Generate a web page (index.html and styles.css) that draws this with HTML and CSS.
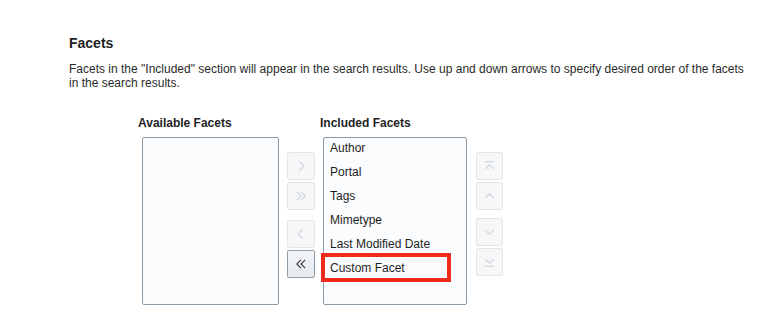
FILE: index.html
```html
<!DOCTYPE html>
<html>
<head>
<meta charset="utf-8">
<link rel="stylesheet" href="styles.css">
</head>
<body>
<div class="page">
  <h2 class="title">Facets</h2>
  <p class="desc">Facets in the "Included" section will appear in the search results. Use up and down arrows to specify desired order of the facets in the search results.</p>
  <div class="shuttle">
    <div class="col col-avail">
      <div class="label">Available Facets</div>
      <div class="listbox listbox-avail"></div>
    </div>
    <div class="btns btns-move">
      <div class="group">
        <button class="btn" disabled><svg viewBox="0 0 28 28"><path d="M12 9 17 14 12 19"/></svg></button>
        <button class="btn" disabled><svg viewBox="0 0 28 28"><path d="M9.5 9.5 14 14 9.5 18.5M14 9.5 18.5 14 14 18.5"/></svg></button>
      </div>
      <div class="group">
        <button class="btn" disabled><svg viewBox="0 0 28 28"><path d="M16 9 11 14 16 19"/></svg></button>
        <button class="btn btn-active"><svg viewBox="0 0 28 28"><path d="M14 9.5 9.5 14 14 18.5M18.5 9.5 14 14 18.5 18.5"/></svg></button>
      </div>
    </div>
    <div class="col col-incl">
      <div class="label">Included Facets</div>
      <div class="listbox listbox-incl">
        <div class="item">Author</div>
        <div class="item">Portal</div>
        <div class="item">Tags</div>
        <div class="item">Mimetype</div>
        <div class="item">Last Modified Date</div>
        <div class="item item-marked">Custom Facet</div>
      </div>
    </div>
    <div class="btns btns-order">
      <div class="group">
        <button class="btn sm" disabled><svg viewBox="0 0 27 27"><path d="M8.5 9h10M9 16.5 13.5 12 18 16.5"/></svg></button>
        <button class="btn sm" disabled><svg viewBox="0 0 27 27"><path d="M9 15.5 13.5 11 18 15.5"/></svg></button>
      </div>
      <div class="group">
        <button class="btn sm" disabled><svg viewBox="0 0 27 27"><path d="M9 11.5 13.5 16 18 11.5"/></svg></button>
        <button class="btn sm" disabled><svg viewBox="0 0 27 27"><path d="M9 10.5 13.5 15 18 10.5M8.5 18h10"/></svg></button>
      </div>
    </div>
  </div>
</div>
</body>
</html>
```
FILE: styles.css
```css
html, body {
  margin: 0;
  padding: 0;
  background: #ffffff;
}
body {
  font-family: "Liberation Sans", Arial, Helvetica, sans-serif;
  color: #2a2a2a;
  width: 758px;
  height: 310px;
  overflow: hidden;
}
.page {
  padding: 35px 0 0 69px;
}
.title {
  margin: 0;
  font-size: 14px;
  font-weight: bold;
  line-height: 16px;
  color: #1f1f1f;
}
.desc {
  margin: 11px 0 0 0;
  font-size: 12px;
  line-height: 14px;
  width: 684px;
  color: #2a2a2a;
}
.shuttle {
  display: flex;
  align-items: flex-start;
  margin: 26px 0 0 69px;
}
.label {
  font-size: 12px;
  font-weight: bold;
  line-height: 14px;
  color: #1f1f1f;
}
.listbox {
  box-sizing: border-box;
  height: 168px;
  margin-top: 7px;
  border: 1px solid #8c9ba6;
  border-radius: 2px;
  background: #fbfcfd;
}
.listbox-avail {
  width: 137px;
  margin-left: 4px;
}
.listbox-incl {
  width: 144px;
  margin-left: 3px;
  position: relative;
}
.item {
  height: 24px;
  line-height: 20px;
  padding: 0 6px;
  font-size: 12px;
  color: #1f1f1f;
  white-space: nowrap;
  position: relative;
}
.item-marked::after {
  content: "";
  position: absolute;
  left: -3px;
  top: -5px;
  width: 130px;
  height: 29px;
  box-sizing: border-box;
  border: 4px solid #ef2b1d;
}
.btns {
  display: flex;
  flex-direction: column;
  margin-top: 36px;
}
.btns-move {
  margin-left: 8px;
  margin-right: 5px;
  gap: 10px;
}
.btns-order {
  margin-left: 9px;
  gap: 8px;
}
.group {
  display: flex;
  flex-direction: column;
  gap: 2px;
}
.btn {
  box-sizing: border-box;
  width: 28px;
  height: 28px;
  padding: 0;
  margin: 0;
  border: 1px solid #e3e6e9;
  border-radius: 2px;
  background: #f6f7f8;
  display: block;
}
.btn.sm {
  width: 27px;
  height: 28px;
}
.btn svg {
  display: block;
  width: 100%;
  height: 100%;
  fill: none;
  stroke: #c9ced3;
  stroke-width: 1.1;
}
.btn-active {
  border: 1px solid #8f9da8;
  background: linear-gradient(#f3f5f7, #e6eaed);
}
.btn-active svg {
  stroke: #3a3a3a;
  stroke-width: 1.2;
}
```
